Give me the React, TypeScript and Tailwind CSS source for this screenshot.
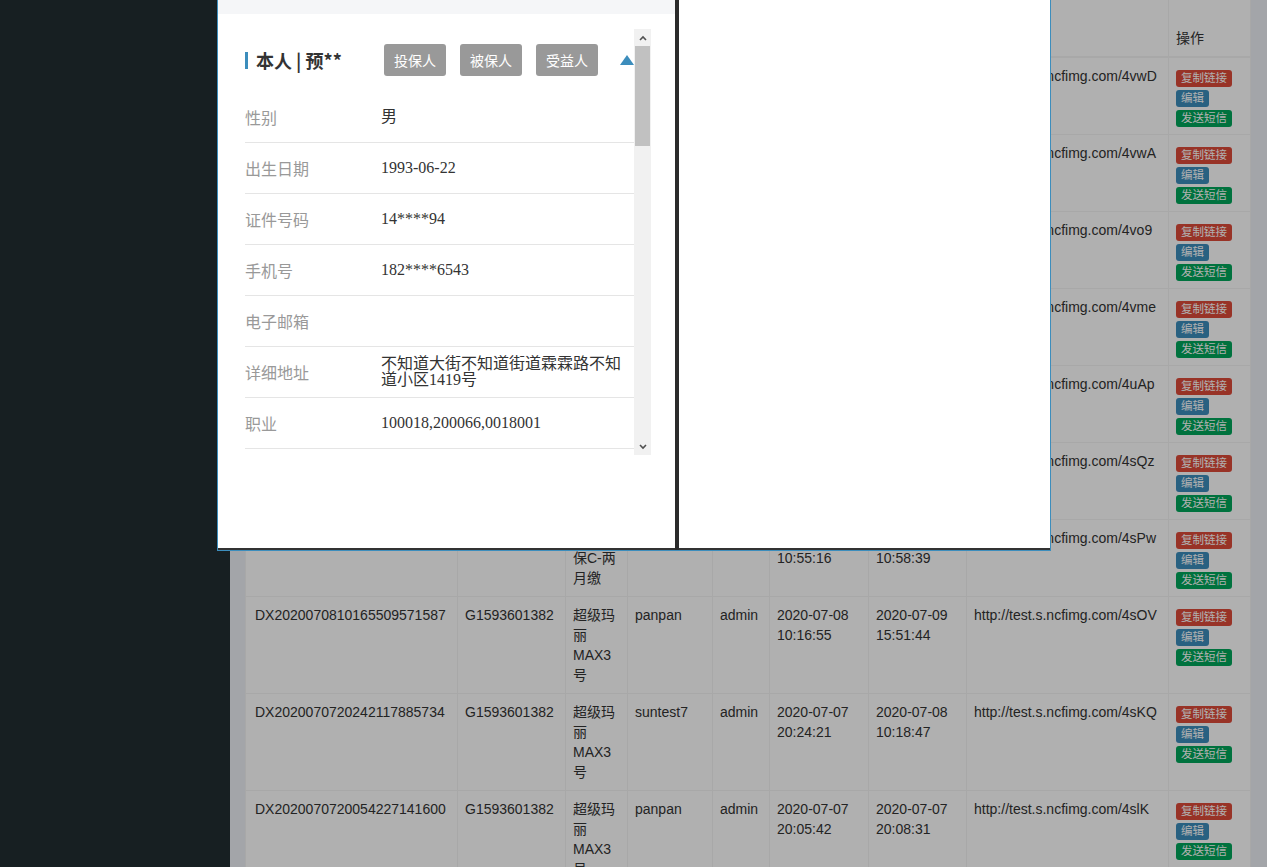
import React from 'react';

type Row = {
  no: string;
  pid: string;
  name: string;
  user: string;
  op: string;
  created: string;
  updated: string;
  url: string;
};

const ROWS: Row[] = [
  { no: 'DX2020071017450231884206', pid: 'G1593601382', name: '小米医保C-两月缴', user: 'panpan', op: 'admin', created: '2020-07-10 17:45:02', updated: '2020-07-10 17:52:16', url: 'http://test.s.ncfimg.com/4vwD' },
  { no: 'DX2020071017122084410927', pid: 'G1593601382', name: '小米医保C-两月缴', user: 'panpan', op: 'admin', created: '2020-07-10 17:12:20', updated: '2020-07-10 17:20:41', url: 'http://test.s.ncfimg.com/4vwA' },
  { no: 'DX2020071016305517762251', pid: 'G1593601382', name: '小米医保C-两月缴', user: 'suntest7', op: 'admin', created: '2020-07-10 16:30:55', updated: '2020-07-10 16:35:08', url: 'http://test.s.ncfimg.com/4vo9' },
  { no: 'DX2020071015084730512984', pid: 'G1593601382', name: '小米医保C-两月缴', user: 'panpan', op: 'admin', created: '2020-07-10 15:08:47', updated: '2020-07-10 15:11:32', url: 'http://test.s.ncfimg.com/4vme' },
  { no: 'DX2020070914215869023410', pid: 'G1593601382', name: '小米医保C-两月缴', user: 'panpan', op: 'admin', created: '2020-07-09 14:21:58', updated: '2020-07-09 14:30:12', url: 'http://test.s.ncfimg.com/4uAp' },
  { no: 'DX2020070811204315598761', pid: 'G1593601382', name: '小米医保C-两月缴', user: 'suntest7', op: 'admin', created: '2020-07-08 11:20:43', updated: '2020-07-08 11:26:05', url: 'http://test.s.ncfimg.com/4sQz' },
  { no: 'DX2020070810551642276318', pid: 'G1593601382', name: '小米医保C-两月缴', user: 'panpan', op: 'admin', created: '2020-07-08 10:55:16', updated: '2020-07-08 10:58:39', url: 'http://test.s.ncfimg.com/4sPw' },
  { no: 'DX2020070810165509571587', pid: 'G1593601382', name: '超级玛丽MAX3号', user: 'panpan', op: 'admin', created: '2020-07-08 10:16:55', updated: '2020-07-09 15:51:44', url: 'http://test.s.ncfimg.com/4sOV' },
  { no: 'DX2020070720242117885734', pid: 'G1593601382', name: '超级玛丽MAX3号', user: 'suntest7', op: 'admin', created: '2020-07-07 20:24:21', updated: '2020-07-08 10:18:47', url: 'http://test.s.ncfimg.com/4sKQ' },
  { no: 'DX2020070720054227141600', pid: 'G1593601382', name: '超级玛丽MAX3号', user: 'panpan', op: 'admin', created: '2020-07-07 20:05:42', updated: '2020-07-07 20:08:31', url: 'http://test.s.ncfimg.com/4slK' },
];

const HEADERS = ['订单号', '产品编号', '产品名称', '用户名', '操作人', '创建时间', '更新时间', '链接', '操作'];
const COL_WIDTHS = ['w-[212px]', 'w-[108px]', 'w-[62px]', 'w-[85px]', 'w-[57px]', 'w-[99px]', 'w-[98px]', 'w-[202px]', 'w-[82px]'];

const DETAILS: { label: string; value: string }[] = [
  { label: '性别', value: '男' },
  { label: '出生日期', value: '1993-06-22' },
  { label: '证件号码', value: '14****94' },
  { label: '手机号', value: '182****6543' },
  { label: '电子邮箱', value: '' },
  { label: '详细地址', value: '不知道大街不知道街道霖霖路不知道小区1419号' },
  { label: '职业', value: '100018,200066,0018001' },
];

function Badges() {
  return (
    <div className="flex h-[60px] flex-col items-start gap-[3px] pt-[4px] text-[11.5px] text-white">
      <span className="h-[17px] rounded-[3px] bg-[#dd4b39] px-[5px] leading-[17px]">复制链接</span>
      <span className="h-[17px] rounded-[3px] bg-[#3c8dbc] px-[5px] leading-[17px]">编辑</span>
      <span className="h-[17px] rounded-[3px] bg-[#00a65a] px-[5px] leading-[17px]">发送短信</span>
    </div>
  );
}

function Scrollbar() {
  return (
    <div className="flex w-[17px] flex-col bg-[#f1f1f1]">
      <div className="flex h-[17px] items-center justify-center">
        <svg width="8" height="6" viewBox="0 0 8 6">
          <path d="M1 5 L4 2 L7 5" fill="none" stroke="#505050" strokeWidth="1.6" />
        </svg>
      </div>
      <div className="mx-px h-[100px] bg-[#c1c1c1]" />
      <div className="flex-1" />
      <div className="flex h-[17px] items-center justify-center">
        <svg width="8" height="6" viewBox="0 0 8 6">
          <path d="M1 1 L4 4 L7 1" fill="none" stroke="#505050" strokeWidth="1.6" />
        </svg>
      </div>
    </div>
  );
}

function DetailModal() {
  return (
    <div className="absolute left-[217px] top-0 flex h-[551px] w-[834px] border-x border-b border-[#3c8dbc] font-['Noto_Sans_CJK_SC',sans-serif]">
      {/* Left panel */}
      <div className="h-full w-[457px] border-b-2 border-[#333] bg-white">
        <div className="h-[14px] bg-[#f5f6f8]" />
        <div className="ml-[27px] mt-[15px] flex h-[426px] w-[406px]">
          <div className="w-[389px] overflow-hidden pt-[15px]">
            <div className="flex h-[32px] items-center">
              <div className="flex w-[139px] items-center">
                <span className="h-[17px] w-[3px] bg-[#3c8dbc]" />
                <span className="ml-[8px] text-[18px] font-bold leading-none text-[#333]">本人 | 预**</span>
              </div>
              <div className="flex gap-[14px]">
                {['投保人', '被保人', '受益人'].map((t) => (
                  <button
                    key={t}
                    className="h-[32px] rounded-[3px] bg-[#999] px-[10px] text-[14px] leading-[32px] text-white"
                  >
                    {t}
                  </button>
                ))}
              </div>
              <svg className="ml-[22px]" width="14" height="10" viewBox="0 0 14 10">
                <polygon points="7,0 14,10 0,10" fill="#3c8dbc" />
              </svg>
            </div>

            <div className="mt-[16px]">
              {DETAILS.map(({ label, value }) => (
                <div key={label} className="flex h-[51px] items-center border-b border-[#e5e5e5]">
                  <div className="w-[136px] shrink-0 pb-[1px] text-[16px] leading-[20px] text-[#999]">{label}</div>
                  <div className="flex-1 font-['Liberation_Serif','Noto_Sans_CJK_SC',serif] text-[16px] leading-[16px] text-[#333]">
                    {value}
                  </div>
                </div>
              ))}
            </div>
          </div>
          <Scrollbar />
        </div>
      </div>

      {/* Divider */}
      <div className="h-full w-[4px] bg-[#2b2b2b]" />

      {/* Right panel */}
      <div className="h-full flex-1 border-b-2 border-[#333] bg-white" />
    </div>
  );
}

export default function App() {
  return (
    <div className="flex h-[867px] w-[1284px] overflow-hidden bg-white font-['Liberation_Sans','Noto_Sans_CJK_SC',sans-serif] text-[14px] leading-5 text-[#333]">
      <div className="relative flex h-full w-[1267px] overflow-hidden">
        {/* Sidebar */}
        <aside className="h-full w-[230px] shrink-0 bg-[#222d32]" />

        {/* Content */}
        <div className="h-full flex-1 bg-[#ecf0f5] pl-[15px] pr-[17px]">
          <div className="w-[1005px] bg-white">
            <table className="w-full table-fixed border-collapse">
              <colgroup>
                {COL_WIDTHS.map((w, i) => (
                  <col key={i} className={w} />
                ))}
              </colgroup>
              <thead>
                <tr>
                  {HEADERS.map((h, i) => (
                    <th
                      key={h}
                      className={`border-x border-b-2 border-[#f4f4f4] py-2 pr-2 text-left align-bottom font-normal ${
                        i === 0 ? 'pl-[9px]' : 'pl-[7px]'
                      }`}
                    >
                      {h}
                    </th>
                  ))}
                </tr>
              </thead>
              <tbody>
                {ROWS.map((r) => (
                  <tr key={r.no}>
                    <td className="border border-[#f4f4f4] py-2 pl-[9px] pr-2 align-top">{r.no}</td>
                    <td className="border border-[#f4f4f4] py-2 pl-[7px] pr-2 align-top">{r.pid}</td>
                    <td className="border border-[#f4f4f4] py-2 pl-[7px] pr-2 align-top">{r.name}</td>
                    <td className="border border-[#f4f4f4] py-2 pl-[7px] pr-2 align-top">{r.user}</td>
                    <td className="border border-[#f4f4f4] py-2 pl-[7px] pr-2 align-top">{r.op}</td>
                    <td className="border border-[#f4f4f4] py-2 pl-[7px] pr-2 align-top">{r.created}</td>
                    <td className="border border-[#f4f4f4] py-2 pl-[7px] pr-2 align-top">{r.updated}</td>
                    <td className="border border-[#f4f4f4] py-2 pl-[7px] pr-2 align-top">{r.url}</td>
                    <td className="border border-[#f4f4f4] py-2 pl-[7px] pr-2 align-top">
                      <Badges />
                    </td>
                  </tr>
                ))}
              </tbody>
            </table>
          </div>
        </div>

        {/* Backdrop */}
        <div className="absolute inset-0 bg-black/[0.31]" />

        <DetailModal />
      </div>
      <div className="h-full w-[17px] bg-white" />
    </div>
  );
}
